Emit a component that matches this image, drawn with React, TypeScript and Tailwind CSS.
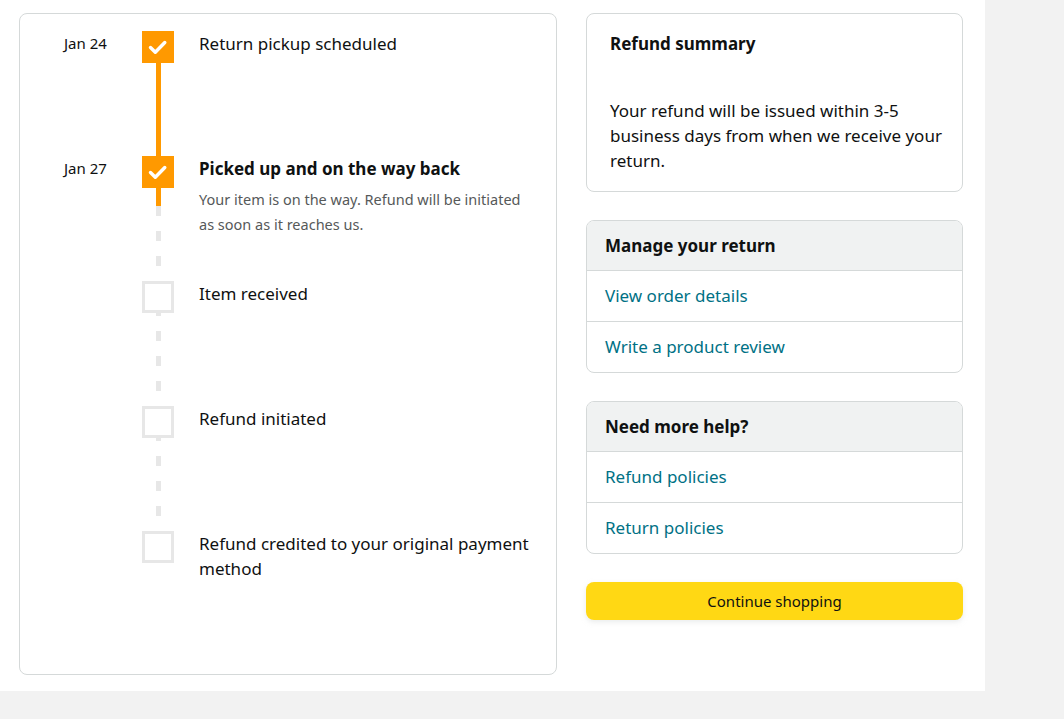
import React from "react";

type Step = {
  date?: string;
  title: string;
  note?: string;
  done: boolean;
  bold?: boolean;
  connector?: "solid" | "mixed" | "dashed";
};

const steps: Step[] = [
  { date: "Jan 24", title: "Return pickup scheduled", done: true, connector: "solid" },
  {
    date: "Jan 27",
    title: "Picked up and on the way back",
    note: "Your item is on the way. Refund will be initiated as soon as it reaches us.",
    done: true,
    bold: true,
    connector: "mixed",
  },
  { title: "Item received", done: false, connector: "dashed" },
  { title: "Refund initiated", done: false, connector: "dashed" },
  { title: "Refund credited to your original payment method", done: false },
];

function CheckBox({ done }: { done: boolean }) {
  if (!done) {
    return <div className="h-8 w-8 shrink-0 border-[3px] border-[#e7e7e7] bg-white" />;
  }
  return (
    <div className="flex h-8 w-8 shrink-0 items-center justify-center bg-[#ff9900]">
      <svg width="32" height="32" viewBox="0 0 32 32" fill="none">
        <path d="M8.5 16.5l4.8 4.8L22.8 11.5" stroke="#ffffff" strokeWidth="3.4" strokeLinecap="round" strokeLinejoin="round" />
      </svg>
    </div>
  );
}

function Dash({ h, gap }: { h: string; gap?: boolean }) {
  return <div className={`w-[5px] bg-[#e7e7e7] ${h} ${gap ? "mt-[15px]" : ""}`} />;
}

function Connector({ kind }: { kind?: Step["connector"] }) {
  if (!kind) return null;
  if (kind === "solid") {
    return <div className="w-[5px] flex-1 bg-[#ff9900]" />;
  }
  if (kind === "mixed") {
    return (
      <div className="flex flex-col items-center">
        <div className="h-[18px] w-[5px] bg-[#ff9900]" />
        <Dash h="h-[10px]" />
        <Dash h="h-[10px]" gap />
        <Dash h="h-[10px]" gap />
      </div>
    );
  }
  return (
    <div className="flex flex-col items-center">
      <Dash h="h-[3px]" />
      <Dash h="h-[10px]" gap />
      <Dash h="h-[10px]" gap />
      <Dash h="h-[10px]" gap />
    </div>
  );
}

function TimelineStep({ step, last }: { step: Step; last: boolean }) {
  return (
    <div className={`flex ${last ? "" : "h-[125px]"}`}>
      <div className="w-[78px] shrink-0 text-[15px] leading-[24px] text-[#0f1111]">{step.date}</div>
      <div className="flex w-8 shrink-0 flex-col items-center">
        <CheckBox done={step.done} />
        <Connector kind={step.connector} />
      </div>
      <div className="ml-[25px] flex-1">
        <div className={`text-[17px] leading-[25px] text-[#0f1111] ${step.bold ? "font-bold" : ""}`}>
          {step.title}
        </div>
        {step.note && (
          <div className="mt-[6px] text-[14.5px] leading-[25px] text-[#565959]">{step.note}</div>
        )}
      </div>
    </div>
  );
}

function LinkCard({ title, links }: { title: string; links: string[] }) {
  return (
    <div className="overflow-hidden rounded-lg border border-[#d5d9d9]">
      <div className="flex h-[50px] items-center border-b border-[#d5d9d9] bg-[#f0f2f2] px-[18px] text-[17px] font-bold text-[#0f1111]">
        {title}
      </div>
      {links.map((l, i) => (
        <div
          key={l}
          className={`flex items-center px-[18px] text-[17px] text-[#007185] ${
            i < links.length - 1 ? "h-[51px] border-b border-[#d5d9d9]" : "h-[50px]"
          }`}
        >
          {l}
        </div>
      ))}
    </div>
  );
}

export default function App() {
  return (
    <div className="min-h-screen bg-[#f2f2f2] font-['Noto_Sans',sans-serif]">
      <div className="flex h-[691px] w-[985px] gap-[29px] bg-white pl-[19px] pt-[13px]">
        <div className="h-[662px] w-[538px] rounded-lg border border-[#d5d9d9] pl-[44px] pr-[20px] pt-[17px]">
          {steps.map((s, i) => (
            <TimelineStep key={s.title} step={s} last={i === steps.length - 1} />
          ))}
        </div>

        <div className="flex w-[377px] flex-col gap-[28px]">
          <div className="rounded-lg border border-[#d5d9d9] pb-[18px] pl-[23px] pr-[12px] pt-[18px] text-[#0f1111]">
            <div className="text-[17px] font-bold leading-[24px]">Refund summary</div>
            <p className="mt-[42px] text-[17px] leading-[25px]">
              Your refund will be issued within 3-5 business days from when we receive your return.
            </p>
          </div>

          <LinkCard title="Manage your return" links={["View order details", "Write a product review"]} />
          <LinkCard title="Need more help?" links={["Refund policies", "Return policies"]} />

          <button className="h-[38px] w-full rounded-lg bg-[#ffd814] text-[15px] text-[#0f1111] shadow-[0_2px_5px_0_rgba(213,217,217,0.5)]">
            Continue shopping
          </button>
        </div>
      </div>
    </div>
  );
}
